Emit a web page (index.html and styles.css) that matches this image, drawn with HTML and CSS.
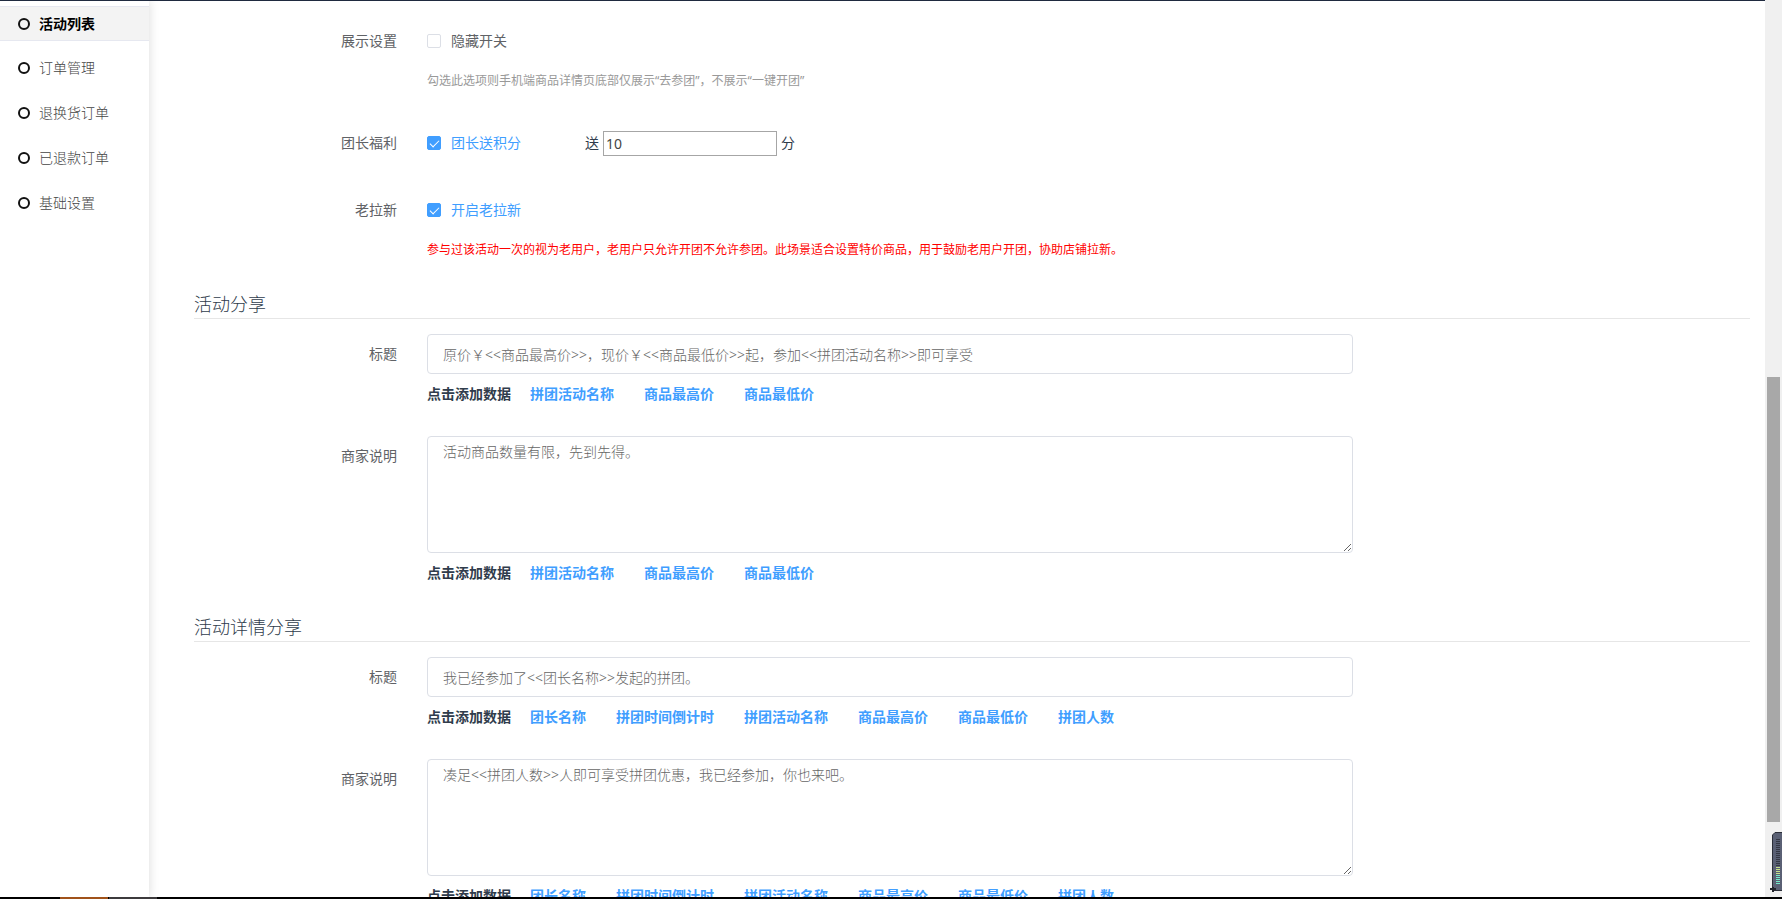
FILE: index.html
```html
<!DOCTYPE html>
<html lang="zh-CN">
<head>
<meta charset="utf-8">
<title>活动列表</title>
<link rel="stylesheet" href="styles.css">
</head>
<body>
<div class="app">
  <div class="page">
    <nav class="sidebar">
      <a class="nav-item active" href="#"><svg class="ring" viewBox="0 0 12 12"><circle cx="6" cy="6" r="5"/></svg>活动列表</a>
      <a class="nav-item" href="#"><svg class="ring" viewBox="0 0 12 12"><circle cx="6" cy="6" r="5"/></svg>订单管理</a>
      <a class="nav-item" href="#"><svg class="ring" viewBox="0 0 12 12"><circle cx="6" cy="6" r="5"/></svg>退换货订单</a>
      <a class="nav-item" href="#"><svg class="ring" viewBox="0 0 12 12"><circle cx="6" cy="6" r="5"/></svg>已退款订单</a>
      <a class="nav-item" href="#"><svg class="ring" viewBox="0 0 12 12"><circle cx="6" cy="6" r="5"/></svg>基础设置</a>
    </nav>
    <main class="content">
      <div class="row">
        <span class="label">展示设置</span>
        <div class="field">
          <div class="line"><label class="check"><input type="checkbox">隐藏开关</label></div>
          <p class="hint">勾选此选项则手机端商品详情页底部仅展示“去参团”，不展示“一键开团”</p>
        </div>
      </div>
      <div class="row tall">
        <span class="label">团长福利</span>
        <div class="field">
          <div class="line">
            <label class="check"><input type="checkbox" checked>团长送积分</label>
            <div class="points"><label for="points">送</label><input id="points" type="text" value="10"><span>分</span></div>
          </div>
        </div>
      </div>
      <div class="row">
        <span class="label">老拉新</span>
        <div class="field">
          <div class="line"><label class="check"><input type="checkbox" checked>开启老拉新</label></div>
          <p class="hint warn">参与过该活动一次的视为老用户，老用户只允许开团不允许参团。此场景适合设置特价商品，用于鼓励老用户开团，协助店铺拉新。</p>
        </div>
      </div>

      <h2 class="section">活动分享</h2>
      <div class="row">
        <label class="label" for="share-title">标题</label>
        <div class="field">
          <input class="box" id="share-title" type="text" value="原价￥&lt;&lt;商品最高价&gt;&gt;，现价￥&lt;&lt;商品最低价&gt;&gt;起，参加&lt;&lt;拼团活动名称&gt;&gt;即可享受">
          <div class="tags"><span>点击添加数据</span><button type="button">拼团活动名称</button><button type="button">商品最高价</button><button type="button">商品最低价</button></div>
        </div>
      </div>
      <div class="row">
        <label class="label" for="share-desc">商家说明</label>
        <div class="field">
          <textarea class="box" id="share-desc">活动商品数量有限，先到先得。</textarea>
          <div class="tags"><span>点击添加数据</span><button type="button">拼团活动名称</button><button type="button">商品最高价</button><button type="button">商品最低价</button></div>
        </div>
      </div>

      <h2 class="section">活动详情分享</h2>
      <div class="row">
        <label class="label" for="detail-title">标题</label>
        <div class="field">
          <input class="box" id="detail-title" type="text" value="我已经参加了&lt;&lt;团长名称&gt;&gt;发起的拼团。">
          <div class="tags"><span>点击添加数据</span><button type="button">团长名称</button><button type="button">拼团时间倒计时</button><button type="button">拼团活动名称</button><button type="button">商品最高价</button><button type="button">商品最低价</button><button type="button">拼团人数</button></div>
        </div>
      </div>
      <div class="row">
        <label class="label" for="detail-desc">商家说明</label>
        <div class="field">
          <textarea class="box" id="detail-desc">凑足&lt;&lt;拼团人数&gt;&gt;人即可享受拼团优惠，我已经参加，你也来吧。</textarea>
          <div class="tags"><span>点击添加数据</span><button type="button">团长名称</button><button type="button">拼团时间倒计时</button><button type="button">拼团活动名称</button><button type="button">商品最高价</button><button type="button">商品最低价</button><button type="button">拼团人数</button></div>
        </div>
      </div>
    </main>
  </div>
  <div class="scrollbar"><div class="thumb"></div></div>
  <svg class="meter" viewBox="0 0 12 60">
    <path d="M12 .5H5L2.500 3V57L4 58.500H12" fill="#5a6074" stroke="#2b2e38"/>
    <path d="M8 7v27" stroke="#343844" stroke-width="4" stroke-dasharray="1 1"/>
    <path d="M8 35v7" stroke="#c4e08c" stroke-width="4" stroke-dasharray="1 1"/>
    <path d="M8 43v9" stroke="#74e8c8" stroke-width="4" stroke-dasharray="1 1"/>
    <path d="M0 57h6M3 55v5" stroke="#22242b" stroke-width="2"/>
  </svg>
</div>
<footer class="taskbar"><i class="task orange"></i><i class="task gray"></i></footer>
</body>
</html>
```
FILE: styles.css
```css
* { box-sizing: border-box; }

body {
  margin: 0;
  height: 100vh;
  display: flex;
  flex-direction: column;
  overflow: hidden;
  background: #fff;
  color: #303c4c;
  font: 300 14px/20px "Noto Sans", "Noto Sans CJK SC", sans-serif;
}

input, textarea, button { font: inherit; color: inherit; }

.app {
  position: relative;
  flex: 1;
  min-height: 0;
  display: flex;
}

.page {
  flex: 1;
  min-width: 0;
  display: flex;
  overflow: hidden;
  border-top: 1px solid #1f2a3f;
}

.sidebar {
  flex: none;
  width: 149px;
  padding-top: 5px;
  display: flex;
  flex-direction: column;
  gap: 10px;
  box-shadow: 0 0 10px rgba(0, 0, 0, .15);
}

.nav-item {
  height: 35px;
  padding-left: 18px;
  display: flex;
  align-items: center;
  gap: 9px;
  border: solid transparent;
  border-width: 1px 0;
  color: #444;
  text-decoration: none;
}

.nav-item.active {
  margin-bottom: -1px;
  background: #f3f3f3;
  border-color: #e6e8f0;
  color: #000;
  font-weight: 700;
}

.ring {
  width: 12px;
  height: 12px;
  fill: none;
  stroke: #111;
  stroke-width: 2;
}

.content {
  flex: 1;
  min-width: 0;
  padding: 20px 15px 0 45px;
}

.row {
  display: flex;
  gap: 30px;
  margin-bottom: 22px;
}

.row.tall { margin-bottom: 27px; }

.label {
  flex: none;
  width: 203px;
  line-height: 40px;
  text-align: right;
  font-weight: 400;
  color: #606266;
}

.field { flex: 1; min-width: 0; }

.line {
  height: 40px;
  display: flex;
  align-items: center;
  gap: 64px;
  font-weight: 400;
}

.check {
  display: flex;
  align-items: center;
  gap: 10px;
  color: #606266;
}

.check:has(:checked) { color: #409eff; }

.check input {
  appearance: none;
  width: 14px;
  height: 14px;
  margin: 0;
  display: grid;
  place-items: center;
  border: 1px solid #dcdfe6;
  border-radius: 2px;
  background: #fff;
}

.check input:checked {
  background: #409eff;
  border-color: #409eff;
}

.check input:checked::after {
  content: "";
  width: 4px;
  height: 8px;
  margin-bottom: 2px;
  border: solid #fff;
  border-width: 0 1px 1px 0;
  transform: rotate(45deg);
}

.points {
  display: flex;
  align-items: center;
  gap: 4px;
}

.points input {
  width: 174px;
  height: 25px;
  padding: 0 2px;
  border: 1px solid #a6a6a6;
  color: #444;
}

.hint {
  margin: 0;
  font-size: 12px;
  line-height: 40px;
  font-weight: 400;
  color: #999;
}

.hint.warn { color: #f00; }

.section {
  height: 27px;
  margin: 0 0 15px;
  border-bottom: 1px solid #e6e6e6;
  font-size: 18px;
  line-height: 25px;
  font-weight: 300;
}

.box {
  display: block;
  width: 70%;
  height: 40px;
  padding: 0 15px;
  border: 1px solid #dcdfe6;
  border-radius: 4px;
  background: #fff;
  color: #666;
}

textarea.box {
  height: 117px;
  padding-top: 5px;
  resize: vertical;
}

.tags {
  height: 40px;
  display: flex;
  align-items: center;
  gap: 30px;
  font-weight: 700;
  white-space: nowrap;
}

.tags span { margin-right: -11px; }

.tags button {
  padding: 0;
  border: 0;
  background: none;
  color: #409eff;
}

.scrollbar {
  flex: none;
  width: 17px;
  padding: 0 2px;
  display: grid;
  grid-template-rows: 377fr 445fr 75fr;
  background: #f0f0f0;
}

.thumb { grid-row: 2; background: #a8a8a8; }

.meter {
  position: absolute;
  right: 0;
  bottom: 5px;
  width: 12px;
  height: 60px;
}

.taskbar {
  flex: none;
  height: 2px;
  padding-left: 60px;
  display: flex;
  gap: 1px;
  background: #000;
}

.task { width: 48px; }
.orange { background: #a0521a; }
.gray { background: #3c3a3c; }
```
